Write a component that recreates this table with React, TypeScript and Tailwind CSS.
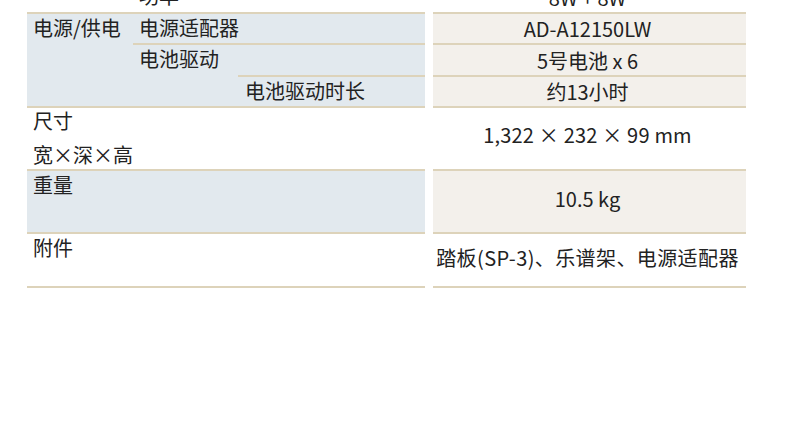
import type { ReactNode } from 'react'

const LINE = 'border-b-2 border-[#ddd3ba]'
const BLUE = 'bg-[#e2e9ee]'
const BEIGE = 'bg-[#f3f0eb]'

function Cell({ children, className = '' }: { children?: ReactNode; className?: string }) {
  return <div className={`pl-[6px] leading-[27px] ${className}`}>{children}</div>
}

function Value({ children, className = '' }: { children?: ReactNode; className?: string }) {
  return <div className={`flex items-center justify-center pr-[4px] leading-[27px] ${className}`}>{children}</div>
}

function SpecRow({ h, shaded, left, right, rightClass = '' }: { h: string; shaded?: boolean; left: ReactNode; right: ReactNode; rightClass?: string }) {
  return (
    <div className={`flex gap-[8px] ${h}`}>
      <div className={`w-[398px] ${LINE} ${shaded ? BLUE : 'bg-white'}`}>{left}</div>
      <Value className={`w-[313px] ${LINE} ${shaded ? BEIGE : 'bg-white'} ${rightClass}`}>{right}</Value>
    </div>
  )
}

export default function App() {
  return (
    <div className="min-h-screen overflow-hidden bg-white font-['Noto_Sans_CJK_SC','Noto_Sans',sans-serif] text-[20px] text-[#222]">
      <div className="ml-[27px] mt-[-18px] flex w-[719px] flex-col">
        {/* 功率 (cut off at the top) */}
        <SpecRow
          h="h-[32px]"
          left={
            <div className="grid h-full grid-cols-[106px_1fr]">
              <div />
              <Cell>功率</Cell>
            </div>
          }
          right="8W + 8W"
        />

        {/* 电源/供电 */}
        <div className="flex gap-[8px]">
          <div className={`grid w-[398px] grid-cols-[106px_105px_1fr] grid-rows-[31px_32px_29px] ${LINE} ${BLUE}`}>
            <Cell className="row-span-3">电源/供电</Cell>
            <Cell className={`col-span-2 ${LINE}`}>电源适配器</Cell>
            <Cell className="row-span-2">电池驱动</Cell>
            <div className={LINE} />
            <Cell className="pl-[7px]">电池驱动时长</Cell>
          </div>
          <div className={`flex w-[313px] flex-col ${BEIGE}`}>
            <Value className={`h-[31px] ${LINE}`}>AD-A12150LW</Value>
            <Value className={`h-[32px] ${LINE}`}>5号电池 x 6</Value>
            <Value className={`h-[31px] ${LINE}`}>约13小时</Value>
          </div>
        </div>

        <SpecRow
          h="h-[63px]"
          left={
            <div className="pl-[6px]">
              <div className="leading-[25px]">尺寸</div>
              <div className="mt-[8px] leading-[27px]">宽×深×高</div>
            </div>
          }
          right="1,322 × 232 × 99 mm"
          rightClass="pb-[9px] tracking-[0.2px]"
        />

        <SpecRow h="h-[63px]" shaded left={<Cell>重量</Cell>} right="10.5 kg" rightClass="pb-[6px]" />

        <SpecRow
          h="h-[54px]"
          left={<Cell>附件</Cell>}
          right="踏板(SP-3)、乐谱架、电源适配器"
          rightClass="pb-[5px] tracking-[0.4px]"
        />
      </div>
    </div>
  )
}
